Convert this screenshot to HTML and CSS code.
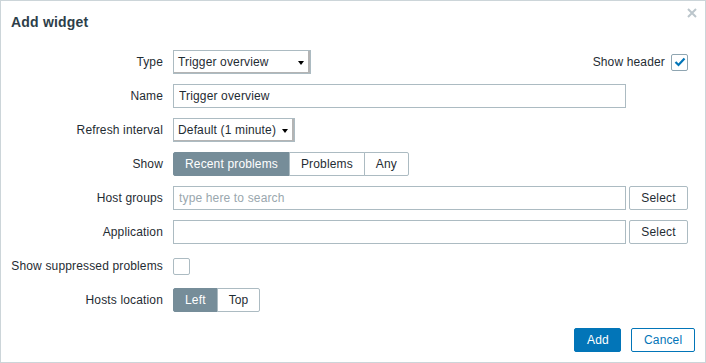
FILE: index.html
```html
<!DOCTYPE html>
<html>
<head>
<meta charset="utf-8">
<link rel="stylesheet" href="styles.css">
</head>
<body>
<div class="dialog">
  <button class="close" aria-label="Close">
    <svg width="10" height="10" viewBox="0 0 10 10"><path d="M1 1 L9 9 M9 1 L1 9" stroke="#bcc6cc" stroke-width="2" fill="none"/></svg>
  </button>
  <div class="header"><h4 class="title">Add widget</h4></div>
  <div class="body">
    <div class="form">
      <div class="label">Type</div>
      <div class="field split">
        <div class="select w137">Trigger overview<span class="arrow"></span></div>
        <div class="inline"><span class="inline-label">Show header</span><span class="checkbox checked"><svg width="12" height="10" viewBox="0 0 12 10"><path d="M1.5 5 L4.5 8 L10.5 1.5" stroke="#0275b8" stroke-width="2.2" fill="none"/></svg></span></div>
      </div>

      <div class="label">Name</div>
      <div class="field"><input class="text" type="text" value="Trigger overview"></div>

      <div class="label">Refresh interval</div>
      <div class="field"><div class="select w121">Default (1 minute)<span class="arrow"></span></div></div>

      <div class="label">Show</div>
      <div class="field">
        <div class="segmented">
          <span class="seg active">Recent problems</span><span class="seg">Problems</span><span class="seg">Any</span>
        </div>
      </div>

      <div class="label">Host groups</div>
      <div class="field"><input class="text" type="text" placeholder="type here to search"><button class="btn-alt">Select</button></div>

      <div class="label">Application</div>
      <div class="field"><input class="text" type="text"><button class="btn-alt">Select</button></div>

      <div class="label">Show suppressed problems</div>
      <div class="field"><span class="checkbox"></span></div>

      <div class="label">Hosts location</div>
      <div class="field">
        <div class="segmented">
          <span class="seg active">Left</span><span class="seg">Top</span>
        </div>
      </div>
    </div>
  </div>
  <div class="footer">
    <button class="btn-primary">Add</button>
    <button class="btn-secondary">Cancel</button>
  </div>
</div>
</body>
</html>
```

FILE: styles.css
```css
* { box-sizing: border-box; }
html, body { margin: 0; padding: 0; background: #ffffff; }
body {
  font-family: "Liberation Sans", Arial, sans-serif;
  font-size: 12px;
  letter-spacing: 0.15px;
  color: #1f2c33;
}
.dialog {
  position: relative;
  width: 706px;
  height: 363px;
  border: 1px solid #ccd5d9;
  background: #fff;
  display: flex;
  flex-direction: column;
}
.close {
  position: absolute;
  top: 6px;
  right: 7px;
  width: 12px;
  height: 12px;
  padding: 0;
  border: 0;
  background: transparent;
  display: flex;
  align-items: center;
  justify-content: center;
}
.header {
  padding: 12px 10px 0 10px;
  height: 39px;
}
.title {
  margin: 0;
  font-size: 14px;
  line-height: 18px;
  font-weight: bold;
  letter-spacing: 0.2px;
  color: #2d3e49;
}
.body {
  padding: 10px 19px 0 10px;
}
.form {
  display: grid;
  grid-template-columns: 152px 1fr;
  column-gap: 10px;
  row-gap: 10px;
  align-items: center;
}
.label {
  text-align: right;
  line-height: 24px;
  white-space: nowrap;
}
.field {
  display: flex;
  align-items: center;
  gap: 3px;
  min-height: 24px;
}
.field.split { justify-content: space-between; }
.inline { display: flex; align-items: center; gap: 6px; }
.select {
  position: relative;
  height: 24px;
  line-height: 22px;
  border: 1px solid #acbbc2;
  padding: 0 4px;
  background: #fff;
  box-shadow: inset -2px -1px 0 #b4b4b4;
  white-space: nowrap;
}
.w137 { width: 138px; }
.w121 { width: 122px; }
.arrow {
  position: absolute;
  right: 6px;
  top: 10px;
  width: 0;
  height: 0;
  border-left: 3px solid transparent;
  border-right: 3px solid transparent;
  border-top: 4px solid #000;
}
.text {
  width: 453px;
  height: 24px;
  border: 1px solid #acbbc2;
  padding: 0 5px;
  font-family: inherit;
  font-size: 12px;
  letter-spacing: 0.15px;
  color: #1f2c33;
  background: #fff;
  outline: none;
}
.text::placeholder { color: #9aa7ae; }
.btn-alt {
  width: 59px;
  height: 24px;
  padding: 0;
  border: 1px solid #acbbc2;
  border-radius: 2px;
  background: #fff;
  font-family: inherit;
  font-size: 12px;
  letter-spacing: 0.15px;
  color: #1f2c33;
}
.checkbox {
  width: 17px;
  height: 17px;
  border: 1px solid #acbbc2;
  border-radius: 2px;
  background: #fff;
  display: inline-flex;
  align-items: center;
  justify-content: center;
}
.checkbox.checked { border-color: #8fa5b1; }
.segmented {
  display: flex;
  height: 24px;
}
.seg {
  height: 24px;
  line-height: 22px;
  padding: 0 11px;
  border: 1px solid #acbbc2;
  margin-left: -1px;
  background: #fff;
  white-space: nowrap;
}
.seg:first-child { margin-left: 0; border-radius: 2px 0 0 2px; }
.seg:last-child { border-radius: 0 2px 2px 0; }
.seg.active {
  background: #768d99;
  border-color: #768d99;
  color: #fff;
}
.footer {
  margin-top: auto;
  display: flex;
  justify-content: flex-end;
  gap: 10px;
  padding: 0 10px 10px 0;
}
.btn-primary, .btn-secondary {
  height: 24px;
  padding: 0 12px;
  border-radius: 2px;
  font-family: inherit;
  font-size: 12px;
  letter-spacing: 0.15px;
}
.btn-primary {
  width: 47px;
  background: #0275b8;
  border: 1px solid #0275b8;
  color: #fff;
}
.btn-secondary {
  width: 64px;
  background: #fff;
  border: 1px solid #0275b8;
  color: #0275b8;
}
```
